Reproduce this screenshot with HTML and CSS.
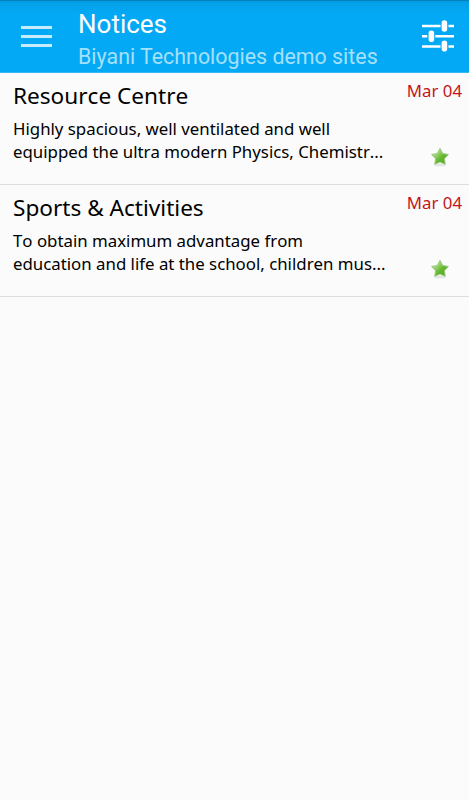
FILE: index.html
```
<!DOCTYPE html>
<html lang="en">

<head>
    <meta charset="UTF-8">
    <title>Notices</title>
    <link rel="stylesheet" href="styles.css">
</head>

<body>
    <div class="header">
        <svg class="menu" width="32" height="24" viewBox="0 0 32 24">
            <path d="M0 2.5H31M0 11.5H31M0 20.5H31" />
        </svg>
        <div class="heading">
            <h1>Notices</h1>
            <p>Biyani Technologies demo sites</p>
        </div>
        <svg class="filter" width="32" height="32" viewBox="0 0 32 32">
            <path class="line" d="M0 6H18.5M26.5 6H32M0 16.3H5.3M13.3 16.3H32M0 26.5H18.5M26.5 26.5H32" />
            <path class="knob" d="M22.4 3V9M9.4 13.3V19.3M22.4 23.3V28.8" />
        </svg>
    </div>
    <ul class="list">
        <li class="notice">
            <div class="text">
                <h2>Resource Centre</h2>
                <p>Highly spacious, well ventilated and well<br>equipped the ultra modern Physics, Chemistr...</p>
            </div>
            <div class="side">
                <span class="date">Mar 04</span>
                <svg class="star" width="20" height="20" viewBox="0 0 20 20">
                    <defs>
                        <linearGradient id="green" x1="0" y1="0" x2="1" y2="1">
                            <stop offset="0.2" stop-color="#b9e39b" />
                            <stop offset="0.55" stop-color="#69ba35" />
                            <stop offset="1" stop-color="#4a9f1c" />
                        </linearGradient>
                    </defs>
                    <ellipse class="shadow" cx="10" cy="18" rx="6.5" ry="1.5" />
                    <path d="M10 1.5L12.6 6.5L18.3 7.5L14.4 11.7L15.2 17.2L10 15L4.8 17.2L5.6 11.7L1.7 7.5L7.4 6.5Z" />
                </svg>
            </div>
        </li>
        <li class="notice">
            <div class="text">
                <h2>Sports &amp; Activities</h2>
                <p>To obtain maximum advantage from<br>education and life at the school, children mus...</p>
            </div>
            <div class="side">
                <span class="date">Mar 04</span>
                <svg class="star" width="20" height="20" viewBox="0 0 20 20">
                    <ellipse class="shadow" cx="10" cy="18" rx="6.5" ry="1.5" />
                    <path d="M10 1.5L12.6 6.5L18.3 7.5L14.4 11.7L15.2 17.2L10 15L4.8 17.2L5.6 11.7L1.7 7.5L7.4 6.5Z" />
                </svg>
            </div>
        </li>
    </ul>
</body>

</html>
```
FILE: styles.css
```
html,
body {
    margin: 0;
    padding: 0;
}

body {
    background-color: #fbfbfb;
    font-family: "Noto Sans", sans-serif;
    color: #000;
}

h1,
h2,
p,
ul {
    margin: 0;
    padding: 0;
    font-weight: normal;
}

.header {
    display: flex;
    box-sizing: border-box;
    height: 73px;
    padding: 0 15px 0 21px;
    background: linear-gradient(#0380b9 0, #0380b9 1px, #049ae0 1px, #05a1ea 4px, #03a9f4 14px, #03a9f4 72px, #35b9f6 72px);
    font-family: Roboto, sans-serif;
}

.menu {
    margin: 25px 25px 0 0;
    fill: none;
    stroke: #c5ebfd;
    stroke-width: 3;
}

.heading {
    flex: 1;
    white-space: nowrap;
}

.heading h1 {
    padding-top: 8px;
    font-size: 26px;
    line-height: 32px;
    color: #fff;
}

.heading p {
    font-size: 21.4px;
    line-height: 33px;
    color: #a5e0fc;
}

.filter {
    margin-top: 20px;
    fill: none;
    stroke: #fff;
}

.line {
    stroke-width: 2.5;
}

.knob {
    stroke-width: 5.6;
    stroke-linecap: round;
}

.list {
    list-style: none;
}

.notice {
    display: flex;
    justify-content: space-between;
    box-sizing: border-box;
    height: 112px;
    padding: 6px 7px 0 13px;
    border-bottom: 1px solid #dedede;
    font-kerning: none;
    white-space: nowrap;
}

.notice h2 {
    padding-top: 1px;
    font-size: 22.6px;
    line-height: 32px;
}

.notice p {
    padding-top: 5px;
    font-size: 16.82px;
    line-height: 23px;
}

.side {
    display: flex;
    flex-direction: column;
    align-items: flex-end;
}

.date {
    font-size: 16.8px;
    line-height: 23px;
    color: #c4161c;
}

.star {
    margin: 45px 12px 0 0;
    fill: url(#green);
    stroke: #94c777;
    stroke-linejoin: round;
}

.shadow {
    fill: #e4e4e4;
    stroke: none;
}
```
